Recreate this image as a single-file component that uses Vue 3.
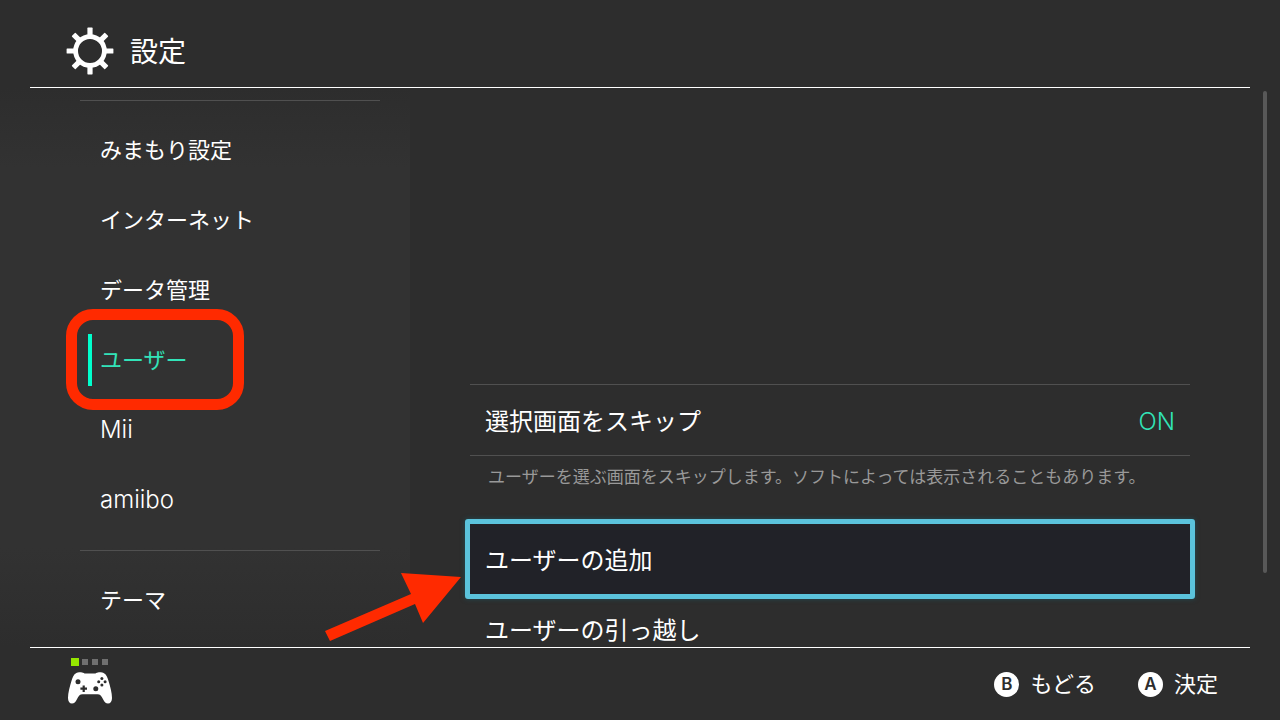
<script setup>
import { ref } from 'vue'

const groups = [
  ['みまもり設定', 'インターネット', 'データ管理', 'ユーザー', 'Mii', 'amiibo'],
  ['テーマ'],
]
const current = ref('ユーザー')
const skip = ref(true)
const rays = [0, 45, 90, 135, 180, 225, 270, 315]
const isLatin = (name) => /^[a-z]+$/i.test(name)
</script>

<template>
  <div class="screen">
    <header class="top">
      <svg class="gear" viewBox="-24 -24 48 48" aria-hidden="true">
        <circle r="14.4" fill="none" stroke="currentColor" stroke-width="4.8" />
        <rect
          v-for="a in rays"
          :key="a"
          x="-2.6"
          y="-23.4"
          width="5.2"
          height="8"
          rx="0.6"
          fill="currentColor"
          :transform="`rotate(${a})`"
        />
      </svg>
      <h1>設定</h1>
    </header>

    <main class="body">
      <nav class="side" aria-label="設定">
        <ul v-for="(group, g) in groups" :key="g">
          <li v-for="name in group" :key="name">
            <button
              class="item"
              :class="{ active: name === current, latin: isLatin(name) }"
              type="button"
              @click="current = name"
            >
              {{ name }}
            </button>
            <span v-if="name === 'ユーザー'" class="ring"></span>
          </li>
        </ul>
      </nav>

      <section class="content">
        <button class="row toggle" type="button" aria-describedby="skip-note" @click="skip = !skip">
          <span>選択画面をスキップ</span>
          <span class="value">{{ skip ? 'ON' : 'OFF' }}</span>
        </button>
        <p id="skip-note" class="note">
          ユーザーを選ぶ画面をスキップします。ソフトによっては表示されることもあります。
        </p>
        <div class="pick">
          <button class="row focused" type="button">ユーザーの追加</button>
          <svg class="arrow" viewBox="0 0 136 68" aria-hidden="true">
            <path d="M136 4 76 0 86 21 0 58 5 68 90 31 98 50Z" fill="#ff2a00" />
          </svg>
        </div>
        <button class="row" type="button">ユーザーの引っ越し</button>
      </section>

      <div class="track"><div class="thumb"></div></div>
    </main>

    <footer class="bottom">
      <div class="pad">
        <div class="lamps"><i class="on"></i><i></i><i></i><i></i></div>
        <svg class="controller" viewBox="0 0 44 32" aria-hidden="true">
          <path
            fill="#fff"
            d="M8 1.2C9.5.3 12 0 14 .4c1.600.3 2 1 3.500 1h9c1.500 0 1.900-.7 3.500-1 2-.4 4.500-.1 6 .8 2.600 1.500 3.500 4.300 4.700 8.300 1.500 5 3.300 11.500 3.300 16.500 0 3.500-1.500 5.500-4 5.500-2.300 0-3.500-1.500-4.800-4-1.700-3.300-3-5.200-5.700-5.200h-15c-2.700 0-4 1.900-5.700 5.200-1.300 2.500-2.500 4-4.800 4-2.500 0-4-2-4-5.500 0-5 1.800-11.500 3.300-16.500C4.500 5.500 5.400 2.700 8 1.200Z"
          />
          <g fill="#2d2d2d">
            <circle cx="10" cy="9.800" r="2.500" />
            <circle cx="27.800" cy="16.700" r="2.500" />
            <path d="M14.600 13.400h2.200v2.200H19v2.200h-2.200V20h-2.200v-2.200h-2.200v-2.200h2.200Z" />
            <circle cx="33.900" cy="6.500" r="1.500" />
            <circle cx="33.900" cy="12.900" r="1.500" />
            <circle cx="30.700" cy="9.700" r="1.500" />
            <circle cx="37.100" cy="9.700" r="1.500" />
          </g>
        </svg>
      </div>
      <div class="hints">
        <button type="button"><span class="key">B</span><span>もどる</span></button>
        <button type="button"><span class="key">A</span><span>決定</span></button>
      </div>
    </footer>
  </div>
</template>

<style>
body {
  margin: 0;
  background: #2d2d2d;
}
</style>

<style scoped>
.screen {
  display: flex;
  flex-direction: column;
  height: 100vh;
  overflow: hidden;
  background: #2d2d2d;
  color: #fff;
  font-family: Inter, "Noto Sans CJK JP", sans-serif;
}
button {
  margin: 0;
  padding: 0;
  border: 0;
  background: none;
  color: inherit;
  font: inherit;
  text-align: left;
  cursor: pointer;
}
.top {
  display: flex;
  align-items: center;
  gap: 16px;
  box-sizing: border-box;
  height: 88px;
  margin: 0 30px;
  padding: 14px 36px 0;
  border-bottom: 1px solid #fff;
}
.gear {
  width: 48px;
  height: 48px;
}
h1 {
  margin: 0;
  padding-top: 2px;
  font-size: 28px;
  font-weight: 400;
  line-height: 40px;
}
.body {
  position: relative;
  display: flex;
  flex: 1;
  min-height: 0;
  overflow: hidden;
}
.side {
  box-sizing: border-box;
  flex: 0 0 410px;
  padding: 12px 30px 0 80px;
  background: linear-gradient(#2d2d2d, #323232 80px, #323232 460px, #2d2d2d);
}
ul {
  margin: 0 0 15px;
  padding: 14px 0 0;
  border-top: 1px solid #505050;
  list-style: none;
}
li {
  position: relative;
}
.item {
  display: block;
  width: 100%;
  height: 70px;
  padding-left: 20px;
  font-size: 22px;
  line-height: 70px;
}
.latin {
  font-size: 24px;
  font-weight: 300;
}
.active {
  color: #32e3b8;
}
.active::before {
  content: "";
  position: absolute;
  top: 9px;
  left: 8px;
  width: 4px;
  height: 52px;
  background: #00ffcc;
}
.ring {
  position: absolute;
  z-index: 1;
  top: -16px;
  left: -14px;
  box-sizing: border-box;
  width: 178px;
  height: 101px;
  border: 11px solid #ff2a00;
  border-radius: 27px;
  pointer-events: none;
}
.content {
  flex: 1;
  min-width: 0;
  padding: 296px 73px 0 60px;
}
.row {
  display: flex;
  align-items: center;
  justify-content: space-between;
  box-sizing: border-box;
  width: 100%;
  height: 70px;
  padding: 4px 15px 0;
  font-size: 24px;
  line-height: 36px;
}
.toggle {
  height: 72px;
  border: solid #505050;
  border-width: 1px 0;
}
.value {
  color: #32e3b8;
  font-weight: 300;
}
.note {
  margin: 9px 0 30px;
  padding-left: 18px;
  color: #999;
  font-size: 17px;
  line-height: 24px;
}
.pick {
  position: relative;
  margin: 0 -5px -5px;
}
.focused {
  height: 80px;
  border: 5px solid #5bc3dc;
  border-radius: 3px;
  background: #212228;
  box-shadow: 0 0 5px #214b54;
}
.arrow {
  position: absolute;
  top: 54px;
  left: -140px;
  width: 136px;
  height: 68px;
  pointer-events: none;
}
.track {
  flex: 0 0 17px;
  padding-top: 3px;
}
.thumb {
  width: 4px;
  height: 482px;
  border-radius: 2px;
  background: #585858;
}
.bottom {
  display: flex;
  justify-content: space-between;
  box-sizing: border-box;
  height: 73px;
  margin: 0 30px;
  padding: 0 32px 0 38px;
  border-top: 1px solid #fff;
}
.pad {
  padding-top: 10px;
}
.lamps {
  display: flex;
  align-items: center;
  gap: 4px;
  height: 8px;
  padding-left: 3px;
}
.lamps i {
  width: 6px;
  height: 6px;
  background: #707070;
}
.lamps .on {
  width: 8px;
  height: 8px;
  margin-right: -1px;
  background: #95e600;
}
.controller {
  display: block;
  width: 44px;
  height: 32px;
  margin-top: 6px;
}
.hints {
  display: flex;
  gap: 42px;
  font-size: 22px;
  line-height: 30px;
}
.hints button {
  display: flex;
  align-items: center;
  gap: 11px;
}
.key {
  display: grid;
  place-items: center;
  width: 25px;
  height: 25px;
  border-radius: 50%;
  background: #fff;
  color: #2d2d2d;
  font-size: 17px;
  font-weight: 600;
  line-height: 25px;
}
</style>
